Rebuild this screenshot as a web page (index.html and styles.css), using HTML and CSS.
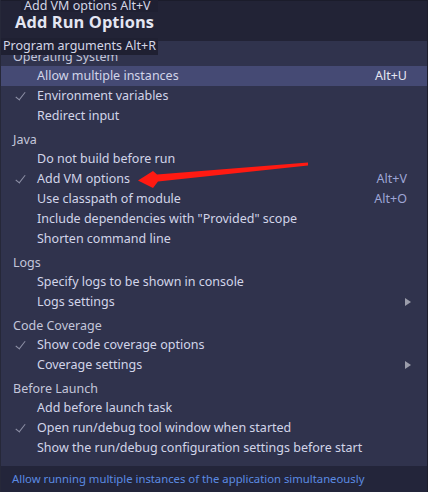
FILE: index.html
```html
<!DOCTYPE html>
<html>
<head>
<meta charset="utf-8">
<link rel="stylesheet" href="styles.css">
</head>
<body>
<div class="popup">
  <div class="header"><span class="title">Add Run Options</span></div>
  <div class="body">
    <div class="group">
      <div class="label">Operating System</div>
      <div class="item selected"><span class="name">Allow multiple instances</span><span class="key">Alt+U</span></div>
      <div class="item checked"><span class="name">Environment variables</span></div>
      <div class="item"><span class="name">Redirect input</span></div>
    </div>
    <div class="group">
      <div class="label">Java</div>
      <div class="item"><span class="name">Do not build before run</span></div>
      <div class="item checked"><span class="name">Add VM options</span><span class="key">Alt+V</span></div>
      <div class="item"><span class="name">Use classpath of module</span><span class="key">Alt+O</span></div>
      <div class="item"><span class="name">Include dependencies with "Provided" scope</span></div>
      <div class="item"><span class="name">Shorten command line</span></div>
    </div>
    <div class="group">
      <div class="label">Logs</div>
      <div class="item"><span class="name">Specify logs to be shown in console</span></div>
      <div class="item sub"><span class="name">Logs settings</span></div>
    </div>
    <div class="group">
      <div class="label">Code Coverage</div>
      <div class="item checked"><span class="name">Show code coverage options</span></div>
      <div class="item sub"><span class="name">Coverage settings</span></div>
    </div>
    <div class="group">
      <div class="label">Before Launch</div>
      <div class="item"><span class="name">Add before launch task</span></div>
      <div class="item checked"><span class="name">Open run/debug tool window when started</span></div>
      <div class="item"><span class="name">Show the run/debug configuration settings before start</span></div>
    </div>
  </div>
  <div class="footer">Allow running multiple instances of the application simultaneously</div>

  <div class="tip tip-vm">Add VM options Alt+V</div>
  <div class="tip tip-args">Program arguments Alt+R</div>

  <svg class="arrow" width="428" height="492" viewBox="0 0 428 492">
    <polygon points="307,162.5 156,174.5 152,171 137,180.5 152,188 157,181.5 307,165.5" fill="#ff1a12"/>
  </svg>
</div>
</body>
</html>
```

FILE: styles.css
```css
* { box-sizing: border-box; }
html, body { margin: 0; padding: 0; background: #30334d; }
body {
  font-family: "Noto Sans", "Open Sans", sans-serif;
  font-size: 12.5px;
  color: #d2d5e9;
}
.popup {
  position: relative;
  width: 428px;
  height: 492px;
  display: flex;
  flex-direction: column;
  overflow: hidden;
  border-right: 1px solid #1d1e2d;
  border-left: 1px solid #262839;
}
.header {
  height: 41px;
  background: #222336;
  border-top: 1px solid #1b1c2b;
  display: flex;
  align-items: flex-end;
  padding: 0 0 9px 14px;
}
.title {
  font-family: "Open Sans", "Noto Sans", sans-serif;
  font-weight: 700;
  font-size: 16.4px;
  line-height: 20px;
  color: #e4e6f2;
  letter-spacing: 0.1px;
}
.body {
  flex: 1;
  background: #30334d;
  padding: 7px 0 0 0;
  display: flex;
  flex-direction: column;
  gap: 5px;
}
.label {
  height: 18px;
  line-height: 18px;
  padding-left: 12px;
  color: #c3c6da;
}
.item {
  position: relative;
  height: 20px;
  line-height: 20px;
  display: flex;
  align-items: center;
  padding: 0 20px 0 36px;
}
.item .name { flex: 1; white-space: nowrap; }
.item .key { color: #9ea6d6; }
.item.selected { background: #454a74; }
.item.selected .key { color: #e6e7f2; }
.item.checked::before {
  content: "";
  position: absolute;
  left: 17px;
  top: 4px;
  width: 4px;
  height: 9px;
  border-right: 1.4px solid #8d90a6;
  border-bottom: 1.4px solid #8d90a6;
  transform: rotate(38deg);
}
.item.sub::after {
  content: "";
  width: 0;
  height: 0;
  border-top: 4px solid transparent;
  border-bottom: 4px solid transparent;
  border-left: 6px solid #9b9dab;
  margin-right: -4px;
}
.footer {
  height: 26px;
  line-height: 26px;
  background: #23253a;
  color: #5b8be2;
  padding-left: 11px;
  font-size: 11.3px;
  white-space: nowrap;
}
.tip {
  position: absolute;
  background: #1f2032;
  color: #d4d6e6;
  white-space: nowrap;
  font-size: 12.5px;
}
.tip-vm {
  left: 20px;
  top: -5px;
  height: 17px;
  line-height: 21px;
  padding: 0 5px 0 3px;
  width: 137px;
}
.tip-args {
  left: 0;
  top: 38px;
  height: 17px;
  line-height: 15px;
  padding: 0 4px 0 2px;
  width: 157px;
}
.arrow {
  position: absolute;
  left: 0;
  top: 0;
  pointer-events: none;
}
```
